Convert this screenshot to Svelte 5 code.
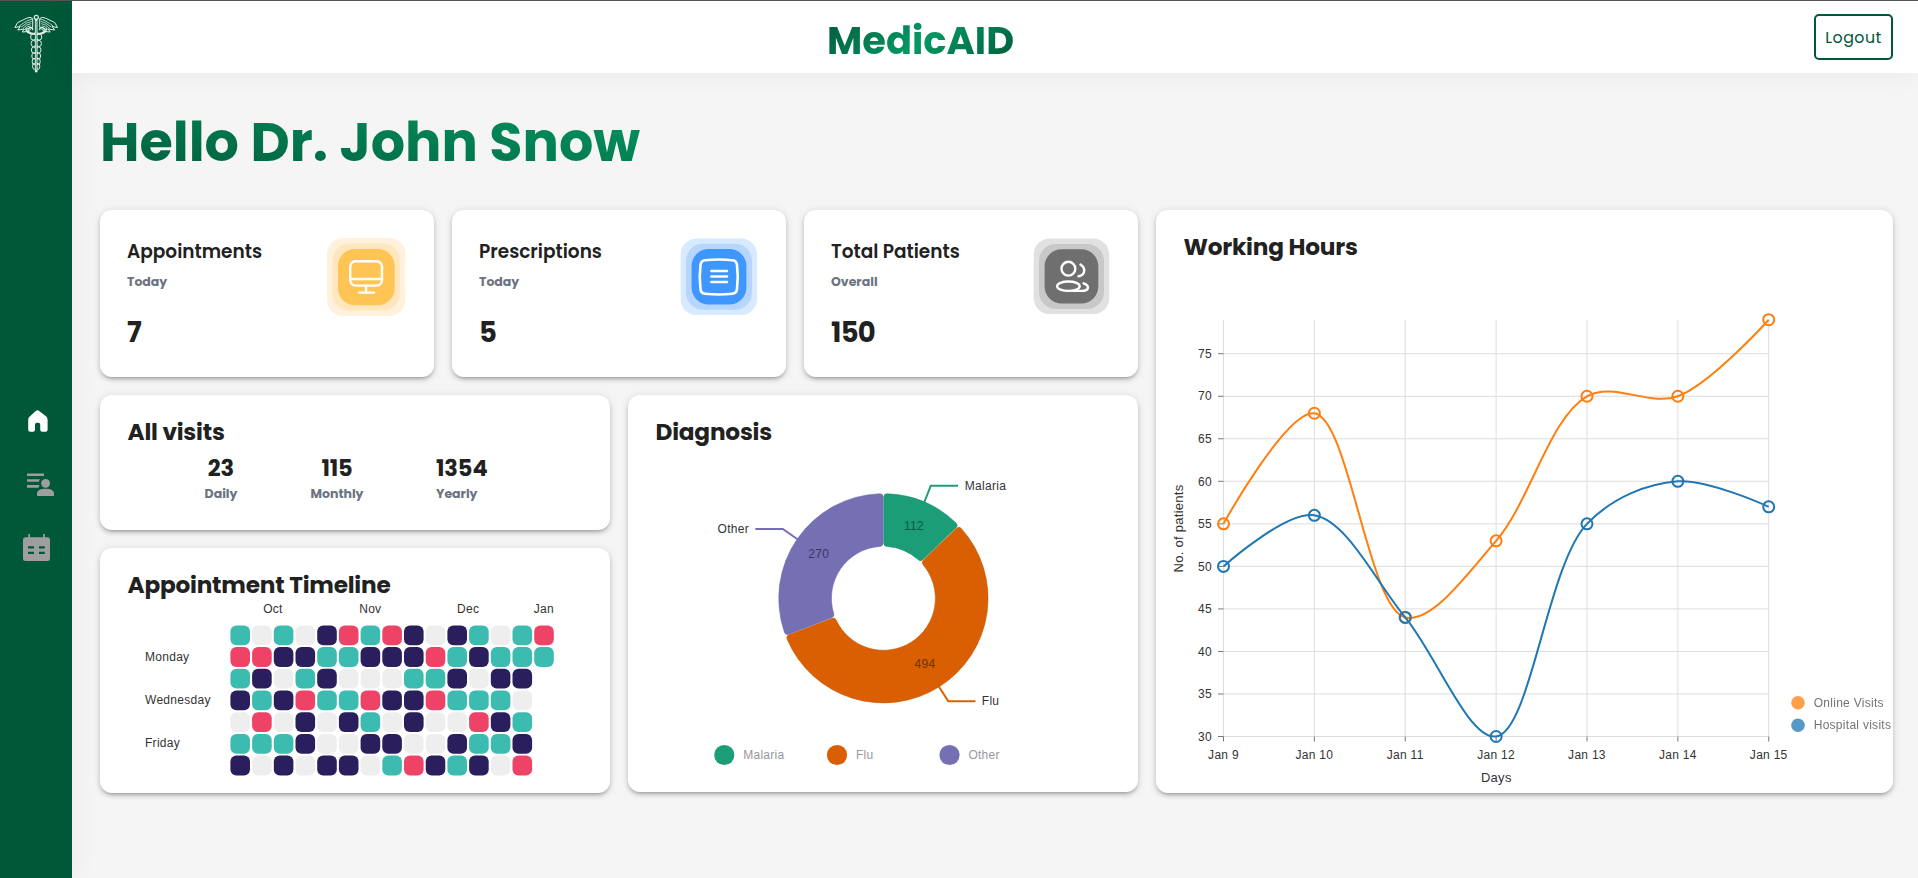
<script>
  const stats = [
    { title: 'Appointments', sub: 'Today', value: '7', icon: 'monitor', cls: 'a' },
    { title: 'Prescriptions', sub: 'Today', value: '5', icon: 'list', cls: 'b' },
    { title: 'Total Patients', sub: 'Overall', value: '150', icon: 'people', cls: 'c' }
  ];

  // t = teal, n = navy, r = red, e = empty
  const weeks = [
    'tetenrtrnentetr',
    'rrnnttnnnrtnttt',
    'tnetneeettnenn',
    'ntnrttrnnrttte',
    'erenenteneernt',
    'tttneenneenttn',
    'nenennetrntner'
  ];
  const fills = { t: '#3cbbb1', n: '#2a1e5c', r: '#ee4266', e: '#eeeeee' };
  const months = [['Oct', 272.9], ['Nov', 370.3], ['Dec', 468.1], ['Jan', 543.9]];
  const days = [['Monday', 661], ['Wednesday', 704], ['Friday', 747.3]];

  const X0 = 1223.5, DX = 90.87, Y30 = 736.5, U = 8.506;
  const px = (i) => X0 + i * DX;
  const py = (v) => Y30 - (v - 30) * U;
  const online = [55, 68, 44, 53, 70, 70, 79];
  const hospital = [50, 56, 44, 30, 55, 60, 57];
  const ticks = [30, 35, 40, 45, 50, 55, 60, 65, 70, 75];

  // centripetal Catmull-Rom spline as cubic segments
  function curve(values) {
    const p = values.map((v, i) => [px(i), py(v)]);
    const d = (a, b) => Math.sqrt(Math.hypot(a[0] - b[0], a[1] - b[1]));
    let out = `M${p[0][0]},${p[0][1]}`;
    for (let i = 0; i < p.length - 1; i++) {
      const a = p[i], b = p[i + 1], s = d(a, b);
      let c1 = a, c2 = b;
      if (i > 0) {
        const z = p[i - 1], r = d(z, a);
        const A = 2 * r * r + 3 * r * s + s * s, N = 3 * r * (r + s);
        c1 = [0, 1].map((k) => (a[k] * A - z[k] * s * s + b[k] * r * r) / N);
      }
      if (i < p.length - 2) {
        const n = p[i + 2], q = d(b, n);
        const B = 2 * q * q + 3 * q * s + s * s, M = 3 * q * (q + s);
        c2 = [0, 1].map((k) => (b[k] * B + a[k] * q * q - n[k] * s * s) / M);
      }
      out += `C${c1},${c2},${b}`;
    }
    return out;
  }

  // ring slice with softened corners
  const CX = 883.4, CY = 598.3, RO = 104.6, RI = 52;
  function slice(a, b) {
    const g = 0.35, k = 3.4;
    const pt = (r, deg, off = 0) => {
      const t = ((deg - 90) * Math.PI) / 180;
      return `${CX + r * Math.cos(t) - off * Math.sin(t)},${CY + r * Math.sin(t) + off * Math.cos(t)}`;
    };
    const ko = (k / RO) * 57.3, ki = (k / RI) * 57.3;
    const big = b - a > 180 ? 1 : 0;
    return `M${pt(RO - k, a, g)}Q${pt(RO, a, g)} ${pt(RO, a + ko, g)}A${RO},${RO} 0 ${big} 1 ${pt(RO, b - ko, -g)}Q${pt(RO, b, -g)} ${pt(RO - k, b, -g)}L${pt(RI + k, b, -g)}Q${pt(RI, b, -g)} ${pt(RI, b - ki, -g)}A${RI},${RI} 0 ${big} 0 ${pt(RI, a + ki, g)}Q${pt(RI, a, g)} ${pt(RI + k, a, g)}Z`;
  }
  const slices = [
    { d: slice(0, 46.03), c: '#1b9e77', e: '#188e6b' },
    { d: slice(46.03, 249.04), c: '#d95f02', e: '#c35602' },
    { d: slice(249.04, 360), c: '#7570b3', e: '#6964ab' }
  ];
  const legend = [['Malaria', 724.3, '#1b9e77'], ['Flu', 837, '#d95f02'], ['Other', 949.5, '#7570b3']];
  const feathers = [0, 1, 2, 3, 4];
  const coils = [37, 43.5, 50, 56, 61.5, 66.3];
</script>

<div class="app">
  <aside>
    <svg class="logo" width="44" height="60" viewBox="14 14 44 60" fill="none" stroke="#e4efe9" stroke-width="1">
      {#each [1, -1] as s}
        <g transform="translate(36.2 0) scale({s} 1)">
          <path d="M3.500 18.500Q6 16.500 9 18L18.500 22.500L21.300 27.500L16 26.500L18.500 30L12 29L14 32L8 31.500L3.500 27Z" />
          {#each feathers as f}
            <path d="M{4 + f * 0.5} {19 + f * 2.300}Q{9 + f * 0.300} {20 + f * 2} {17 - f * 1.800} {26 + f * 1.200}" stroke-width=".8" />
          {/each}
          <path d="M1 33C5 34 9 32 8 29C6 26 2 28 4 30M1 34C8 35 11 31 10 28" stroke-width="1.200" />
        </g>
      {/each}
      {#each coils as y, i}
        <ellipse cx={33.3 + i * 0.2} cy={y} rx={2.7 - i * 0.2} ry="3.100" />
        <ellipse cx={39.1 - i * 0.2} cy={y} rx={2.7 - i * 0.2} ry="3.100" />
      {/each}
      <path d="M36.200 19V72.300" stroke-width="2.600" />
      <path d="M36.200 21V70" stroke="#015839" stroke-width=".6" />
      <circle cx="36.300" cy="17.300" r="2" fill="#015839" stroke-width="1.200" />
    </svg>
    <nav>
      <svg width="28" height="28" viewBox="24 407 28 28">
        <path fill="#fff" d="M30 416.200Q28.200 417.600 28.200 419.500V429.800Q28.200 431.800 30.200 431.800H33Q35 431.800 35 429.800V424.600Q35 422.800 36.800 422.800H38.400Q40.200 422.800 40.200 424.600V429.800Q40.200 431.800 42.200 431.800H45.600Q47.600 431.800 47.600 429.800V419.500Q47.600 417.600 46 416.200L39.200 410.900Q37.500 409.700 35.800 410.900Z" />
      </svg>
      <svg width="28" height="28" viewBox="27 471 28 28" fill="#9e9e9e">
        <path d="M27 473.500H44V476H27ZM27 479.200H40Q39 480.500 39 481.800H27ZM27 485H39.500L38.500 487.700H27Z" />
        <circle cx="45.600" cy="483.300" r="4.400" />
        <path d="M37 496V493.600Q37 488.800 45.500 488.800Q54 488.800 54 493.600V496Z" />
      </svg>
      <svg width="28" height="28" viewBox="23 533 28 28">
        <path fill="#9e9e9e" fill-rule="evenodd" d="M28.300 534H30V537.300H43V534H44.800V537.300H47.500Q50 537.300 50 540V558.500Q50 561 47.500 561H25.500Q23 561 23 558.500V540Q23 537.300 25.500 537.300H28.300ZM28 546.300V548.400H34V546.300ZM39 546.300V548.400H44.800V546.300ZM28 551.800V554H34V551.800ZM39 551.800V554H44.800V551.800Z" />
      </svg>
    </nav>
  </aside>

  <div class="main">
    <header>
      <span></span>
      <div class="brand">MedicAID</div>
      <button>Logout</button>
    </header>

    <main>
      <h1>Hello Dr. John Snow</h1>
      <div class="board">
        <div class="left">
          <div class="stats">
            {#each stats as s}
              <section class="card stat {s.cls}">
                <div>
                  <h3>{s.title}</h3>
                  <p class="sub">{s.sub}</p>
                  <p class="num">{s.value}</p>
                </div>
                <svg width="79" height="79" viewBox="0 0 79 79" fill="none" stroke-linecap="round" stroke-linejoin="round">
                  {#if s.icon === 'monitor'}
                    <rect width="78.500" height="78" rx="16" fill="#fff1dc" />
                    <rect x="5.600" y="5.500" width="67.300" height="67" rx="17" fill="#ffe6bd" />
                    <rect x="11" y="11" width="56.700" height="56.200" rx="17" fill="#ffc554" />
                    <g stroke="#fff" stroke-width="2.400">
                      <rect x="23.200" y="23.300" width="31.800" height="24.300" rx="5.500" />
                      <path d="M23.200 41H55M39 47.600V54M32 54.600H47" />
                    </g>
                  {:else if s.icon === 'list'}
                    <rect x="1.600" y=".6" width="76.500" height="76.500" rx="16" fill="#d8eaff" />
                    <rect x="7" y="5.800" width="66" height="66" rx="17" fill="#b7d6ff" />
                    <rect x="12.600" y="11" width="54.800" height="55.600" rx="17" fill="#3e97ff" />
                    <path d="M26 22.300Q40 20.800 53.500 22.300Q57.500 22.800 58 27Q59.500 39 58 51Q57.500 55.300 53.500 55.700Q40 57.200 26 55.700Q22 55.300 21.500 51Q20 39 21.500 27Q22 22.800 26 22.300Z" stroke="#fff" stroke-width="2.600" />
                    <path d="M32.300 33H48M32.300 38.400H48M32.300 44H48" stroke="#fff" stroke-width="2.500" />
                  {:else}
                    <rect x="2.700" y=".6" width="75.500" height="75.500" rx="16" fill="#e1e1e1" />
                    <rect x="8" y="6" width="65" height="65" rx="17" fill="#c8c8c8" />
                    <rect x="13.600" y="11.300" width="53.700" height="54.300" rx="17" fill="#6f6f6f" />
                    <g stroke="#fff" stroke-width="2.400">
                      <circle cx="37.400" cy="30.700" r="6.900" />
                      <ellipse cx="37.400" cy="48.200" rx="11.300" ry="4.700" />
                      <path d="M49.500 26.600Q53.300 29 53.300 32.700Q52.800 37.800 47.500 38.300M52.600 45.300Q57 47 57 49.500Q56.600 52.800 51 52.900H41" />
                    </g>
                  {/if}
                </svg>
              </section>
            {/each}
          </div>

          <div class="lower">
            <div class="col">
              <section class="card visits">
                <h2>All visits</h2>
                <div class="trio">
                  <div class="v1"><b>23</b><span>Daily</span></div>
                  <div class="v2"><b>115</b><span>Monthly</span></div>
                  <div class="v3"><b>1354</b><span>Yearly</span></div>
                </div>
              </section>
              <section class="card timeline">
                <h2>Appointment Timeline</h2>
                <svg width="510" height="190" viewBox="100 603 510 190">
                  {#each months as m}<text class="lbl" x={m[1]} y="613" text-anchor="middle">{m[0]}</text>{/each}
                  {#each days as d}<text class="lbl" x="145" y={d[1]}>{d[0]}</text>{/each}
                  {#each weeks as row, r}
                    {#each row.split('') as c, i}
                      <rect x={230.4 + i * 21.7} y={625.4 + r * 21.7} width="19.600" height="19.800" rx="6" fill={fills[c]} />
                    {/each}
                  {/each}
                </svg>
              </section>
            </div>

            <section class="card diagnosis">
              <h2>Diagnosis</h2>
              <svg width="510" height="342" viewBox="628 450 510 342">
                {#each slices as s}<path d={s.d} fill={s.c} stroke={s.e} stroke-width=".6" />{/each}
                <g fill="none" stroke-width="2">
                  <path stroke="#1b9e77" d="M924.200 502.500L930.800 485.700H958" />
                  <path stroke="#d95f02" d="M938.500 686L948.300 701.200H975.500" />
                  <path stroke="#7570b3" d="M797.500 539.200L782.800 529H755.300" />
                </g>
                <text class="lbl" x="964.800" y="490">Malaria</text>
                <text class="lbl" x="981.800" y="705">Flu</text>
                <text class="lbl" x="749" y="533.300" text-anchor="end">Other</text>
                <g text-anchor="middle">
                  <text class="lbl" x="914" y="530" style:fill="#0f5841">112</text>
                  <text class="lbl" x="925" y="668" style:fill="#703101">494</text>
                  <text class="lbl" x="818.800" y="558" style:fill="#3c3865">270</text>
                </g>
                {#each legend as l}
                  <circle cx={l[1]} cy="755" r="10.100" fill={l[2]} />
                  <text class="lbl" x={l[1] + 18.9} y="759" style:fill="#999">{l[0]}</text>
                {/each}
              </svg>
            </section>
          </div>
        </div>

        <section class="card hours">
          <h2>Working Hours</h2>
          <svg width="737" height="528" viewBox="1156 265 737 528">
            <g stroke="#dddddd">
              {#each ticks as t}<line x1={X0} x2={px(6)} y1={py(t)} y2={py(t)} />{/each}
              {#each online as _, i}<line x1={px(i)} x2={px(i)} y1={py(79)} y2={Y30} />{/each}
            </g>
            {#each ticks as t}
              <line x1={X0 - 5.5} x2={X0} y1={py(t)} y2={py(t)} stroke="#777" />
              <text class="lbl" x="1212" y={py(t) + 4.2} text-anchor="end">{t}</text>
            {/each}
            {#each online as _, i}
              <line x1={px(i)} x2={px(i)} y1={Y30} y2={Y30 + 5} stroke="#777" />
              <text class="lbl" x={px(i)} y="759" text-anchor="middle">Jan {9 + i}</text>
            {/each}
            <text class="axis" x="1496.300" y="781.700" text-anchor="middle">Days</text>
            <text class="axis" transform="translate(1183 528.500) rotate(-90)" text-anchor="middle">No. of patients</text>
            <g fill="none" stroke-width="2">
              <path d={curve(online)} stroke="#ff7f0e" />
              <path d={curve(hospital)} stroke="#1f77b4" />
              {#each online as v, i}<circle cx={px(i)} cy={py(v)} r="5.500" stroke="#ff7f0e" />{/each}
              {#each hospital as v, i}<circle cx={px(i)} cy={py(v)} r="5.500" stroke="#1f77b4" />{/each}
            </g>
            <g opacity=".75">
              <circle cx="1798" cy="702.700" r="6.800" fill="#ff7f0e" />
              <circle cx="1798" cy="725.300" r="6.800" fill="#1f77b4" />
              <text class="lbl" x="1813.700" y="706.900" style:fill="#444">Online Visits</text>
              <text class="lbl" x="1813.700" y="729.100" style:fill="#444">Hospital visits</text>
            </g>
          </svg>
        </section>
      </div>
    </main>
  </div>
</div>

<style>
  :global(body) { background: #f5f5f5; overflow: hidden; }
  .app {
    box-sizing: border-box;
    width: 1918px;
    height: 878px;
    display: flex;
    border-top: 1px solid #545454;
    background: #f5f5f5;
    color: #212121;
    font-family: Poppins, Inter, sans-serif;
    overflow: hidden;
  }
  h1, h2, h3, p { margin: 0; }
  svg { display: block; }
  aside {
    width: 72px;
    flex: none;
    background: #015839;
    box-shadow: 0 0 30px rgba(0, 0, 0, 0.05);
    display: flex;
    flex-direction: column;
    align-items: center;
  }
  .logo { margin-top: 13px; }
  nav {
    margin-top: 333px;
    display: flex;
    flex-direction: column;
    align-items: center;
    gap: 36px;
    padding-left: 3px;
  }
  nav svg:nth-child(2) { margin-left: 6px; }
  nav svg:nth-child(3) { margin-right: 2px; margin-top: -2px; }
  .main { flex: 1; min-width: 0; }
  header {
    height: 72px;
    background: #fff;
    box-shadow: 0 0 30px rgba(0, 0, 0, 0.055);
    display: grid;
    grid-template-columns: 755px 1fr 79px;
    align-items: center;
    padding-right: 25px;
  }
  .brand {
    justify-self: start;
    margin-top: 8px;
    font-size: 38.400px;
    line-height: 56px;
    font-weight: 700;
    background: linear-gradient(135deg, #015839 0%, #049963 50%, #015839 100%);
    -webkit-background-clip: text;
    background-clip: text;
    color: transparent;
  }
  button {
    box-sizing: border-box;
    width: 79px;
    height: 46px;
    padding: 0;
    border: 2px solid #015839;
    border-radius: 5px;
    background: #fff;
    color: #015839;
    font: 400 15.800px Poppins, Inter, sans-serif;
    letter-spacing: 0.5px;
  }
  main { padding: 27px 25px 0 28px; }
  h1 {
    width: max-content;
    font-size: 54px;
    line-height: 84px;
    font-weight: 700;
    background: linear-gradient(to top right, #015839, #049963);
    -webkit-background-clip: text;
    background-clip: text;
    color: transparent;
  }
  .board { margin-top: 26px; display: flex; gap: 18px; }
  .left { width: 1038px; display: flex; flex-direction: column; gap: 18px; }
  .stats { display: flex; gap: 18px; }
  .lower { display: flex; gap: 18px; align-items: flex-start; }
  .col { display: flex; flex-direction: column; gap: 18px; }
  .card {
    box-sizing: border-box;
    background: #fff;
    border-radius: 12px;
    box-shadow: 0 3px 3px -2px rgba(0, 0, 0, 0.2), 0 3px 4px 0 rgba(0, 0, 0, 0.14), 0 1px 8px 0 rgba(0, 0, 0, 0.12);
    overflow: hidden;
  }
  .stat {
    width: 334px;
    height: 167px;
    padding: 28px 28px 0 27px;
    display: flex;
    justify-content: space-between;
  }
  h3 { font-size: 18.500px; line-height: 27px; font-weight: 600; white-space: nowrap; }
  .sub { margin-top: 7px; font-size: 12.500px; line-height: 20px; font-weight: 700; color: #6b7280; }
  .num { margin-top: 20px; font-size: 27.500px; line-height: 42px; font-weight: 700; letter-spacing: -0.7px; }
  h2 { font-size: 23.200px; line-height: 36px; font-weight: 700; padding: 19px 0 0 27.500px; letter-spacing: -0.2px; white-space: nowrap; }
  .visits { width: 510px; height: 135px; }
  .timeline { width: 510px; height: 245px; }
  .diagnosis { width: 510px; height: 397px; }
  .hours { width: 737px; height: 583px; }
  .trio { display: flex; padding-left: 104px; }
  .trio div { display: flex; flex-direction: column; align-items: center; }
  .trio b { font-size: 22.500px; line-height: 36px; font-weight: 700; letter-spacing: -0.1px; }
  .trio span { margin-top: -1px; font-size: 12.500px; line-height: 18px; font-weight: 700; color: #6b7280; }
  .v1 { width: 34px; }
  .v2 { width: 54px; margin-left: 72px; }
  .trio .v3 { margin-left: 72px; align-items: flex-start; }
  .lbl { font: 12px "Liberation Sans", Arial, sans-serif; letter-spacing: 0.28px; fill: #333; }
  .axis { font: 13px "Liberation Sans", Arial, sans-serif; letter-spacing: 0.28px; fill: #333; }
</style>
